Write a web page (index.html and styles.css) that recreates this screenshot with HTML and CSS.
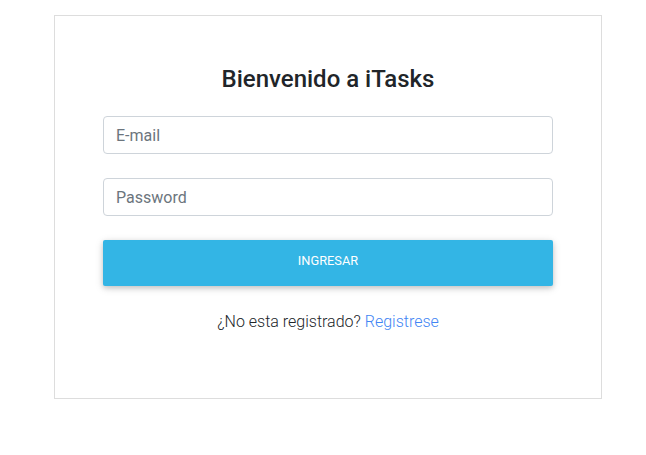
FILE: index.html
```html
<!DOCTYPE html>
<html lang="es">
<head>
<meta charset="utf-8">
<title>iTasks</title>
<link rel="stylesheet" href="styles.css">
</head>
<body>
<div class="card">
  <h3 class="title">Bienvenido a iTasks</h3>
  <form class="form">
    <input class="field" type="email" placeholder="E-mail">
    <input class="field" type="password" placeholder="Password">
    <button class="btn" type="button">INGRESAR</button>
  </form>
  <p class="footer">¿No esta registrado? <a href="#" class="link">Registrese</a></p>
</div>
</body>
</html>
```
FILE: styles.css
```css
html, body {
  margin: 0;
  padding: 0;
  background: #fff;
}
body {
  font-family: Roboto, "Liberation Sans", sans-serif;
  color: #212529;
}
.card {
  box-sizing: border-box;
  width: 548px;
  margin: 15px 0 0 54px;
  border: 1px solid #dddddd;
  padding: 49px 48px 64px;
}
.title {
  margin: 0;
  font-size: 24px;
  font-weight: 500;
  line-height: 28px;
  text-align: center;
  color: #212529;
}
.form {
  display: flex;
  flex-direction: column;
  margin-top: 23px;
}
.field {
  box-sizing: border-box;
  height: 38px;
  width: 100%;
  border: 1px solid #ced4da;
  border-radius: 4px;
  padding: 0 12px;
  font-family: Roboto, "Liberation Sans", sans-serif;
  font-size: 16px;
  color: #495057;
  margin-bottom: 24px;
  outline: none;
}
.field::placeholder {
  color: #6c757d;
}
.btn {
  height: 46px;
  border: 0;
  border-radius: 2px;
  background: #33b5e5;
  color: #fff;
  font-family: Roboto, "Liberation Sans", sans-serif;
  font-size: 12.8px;
  font-weight: 400;
  line-height: 1;
  padding: 0 0 3px;
  box-shadow: 0 2px 5px 0 rgba(0,0,0,0.16), 0 2px 10px 0 rgba(0,0,0,0.12);
}
.footer {
  margin: 24px 0 0;
  text-align: center;
  font-size: 16px;
  font-weight: 300;
  line-height: 24px;
  color: #212529;
}
.link {
  color: #4285f4;
  text-decoration: none;
}
```
